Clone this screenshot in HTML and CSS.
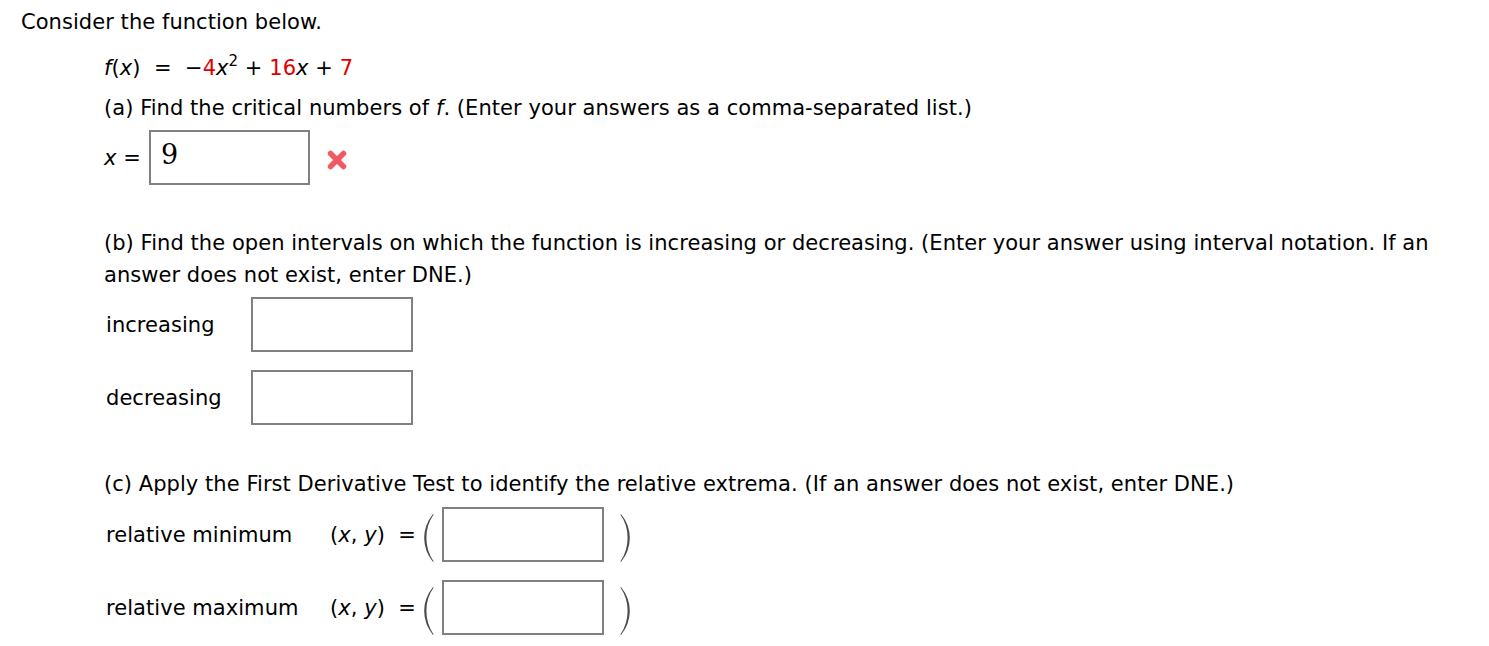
FILE: index.html
```html
<!DOCTYPE html>
<html>
<head>
<meta charset="utf-8">
<link rel="stylesheet" href="styles.css">
</head>
<body>
<div class="page">
  <p class="intro">Consider the function below.</p>
  <div class="content">
    <p class="formula"><i>f</i>(<i>x</i>) &nbsp;= &nbsp;−<span class="red">4</span><i>x</i><sup>2</sup> + <span class="red">16</span><i>x</i> + <span class="red">7</span></p>

    <p class="q qa">(a) Find the critical numbers of <i>f</i>. (Enter your answers as a comma-separated list.)</p>
    <div class="row rowa">
      <span class="lbl-x"><i>x</i> =</span>
      <span class="box boxa"><span class="val">9</span></span>
      <svg class="wrong" width="22" height="22" viewBox="0 0 22 22"><path d="M4.5 4.5 L17.5 17.5 M17.5 4.5 L4.5 17.5" stroke="#f25a63" stroke-width="5.5" stroke-linecap="round"/></svg>
    </div>

    <p class="q qb">(b) Find the open intervals on which the function is increasing or decreasing. (Enter your answer using interval notation. If an answer does not exist, enter DNE.)</p>
    <div class="row rowb1">
      <span class="lbl">increasing</span>
      <span class="box"></span>
    </div>
    <div class="row rowb2">
      <span class="lbl">decreasing</span>
      <span class="box"></span>
    </div>

    <p class="q qc">(c) Apply the First Derivative Test to identify the relative extrema. (If an answer does not exist, enter DNE.)</p>
    <div class="row rowc1">
      <span class="lbl lblc">relative minimum</span>
      <span class="xy">(<i>x</i>, <i>y</i>) &nbsp;=</span>
      <svg class="paren" width="10" height="48" viewBox="0 0 10 48"><path d="M9 0 Q0.2 11 0.2 24 Q0.2 37 9 48 L9.6 47.4 Q2.4 37 2.4 24 Q2.4 11 9.6 0.6 Z" fill="#4a4a4a"/></svg>
      <span class="box"></span>
      <svg class="paren rp" width="10" height="48" viewBox="0 0 10 48"><path d="M1 0 Q9.8 11 9.8 24 Q9.8 37 1 48 L0.4 47.4 Q7.6 37 7.6 24 Q7.6 11 0.4 0.6 Z" fill="#4a4a4a"/></svg>
    </div>
    <div class="row rowc2">
      <span class="lbl lblc">relative maximum</span>
      <span class="xy">(<i>x</i>, <i>y</i>) &nbsp;=</span>
      <svg class="paren" width="10" height="48" viewBox="0 0 10 48"><path d="M9 0 Q0.2 11 0.2 24 Q0.2 37 9 48 L9.6 47.4 Q2.4 37 2.4 24 Q2.4 11 9.6 0.6 Z" fill="#4a4a4a"/></svg>
      <span class="box"></span>
      <svg class="paren rp" width="10" height="48" viewBox="0 0 10 48"><path d="M1 0 Q9.8 11 9.8 24 Q9.8 37 1 48 L0.4 47.4 Q7.6 37 7.6 24 Q7.6 11 0.4 0.6 Z" fill="#4a4a4a"/></svg>
    </div>
  </div>
</div>
</body>
</html>
```
FILE: styles.css
```css
html, body {
  margin: 0;
  padding: 0;
  background: #fff;
}
body {
  font-family: "DejaVu Sans", Verdana, sans-serif;
  font-size: 21px;
  color: #000;
  letter-spacing: 0.05px;
}
.page {
  padding: 8px 0 0 21px;
}
p {
  margin: 0;
}
.intro {
  line-height: 28px;
}
.content {
  padding-left: 83px;
}
.formula {
  margin-top: 18px;
  line-height: 28px;
}
.formula sup {
  font-size: 15px;
  line-height: 0;
  vertical-align: 9px;
}
.red {
  color: #e00000;
}
.q {
  line-height: 32px;
}
.qa {
  margin-top: 10px;
}
.row {
  display: flex;
  align-items: center;
}
.box {
  display: inline-block;
  box-sizing: border-box;
  width: 162px;
  height: 55px;
  border: 2px solid #808080;
  background: #fff;
}
.rowa {
  margin-top: 6px;
}
.lbl-x {
  width: 45px;
}
.boxa {
  width: 161px;
  height: 55px;
  display: flex;
  align-items: center;
  padding-left: 10px;
}
.val {
  font-family: "DejaVu Serif", "Liberation Serif", serif;
  font-size: 27px;
  margin-top: -6px;
}
.wrong {
  margin-left: 16px;
  margin-top: 4px;
}
.qb {
  margin-top: 42px;
}
.rowb1 {
  margin-top: 6px;
}
.rowb2 {
  margin-top: 18px;
}
.lbl {
  width: 145px;
  padding-left: 2px;
}
.qc {
  margin-top: 43px;
}
.rowc1 {
  margin-top: 7px;
}
.rowc2 {
  margin-top: 18px;
}
.lblc {
  width: 224px;
}
.xy {
  width: 94px;
}
.paren {
  margin-right: 8px;
  margin-top: 6px;
}
.paren.rp {
  margin-left: 16px;
  margin-right: 0;
}
```
